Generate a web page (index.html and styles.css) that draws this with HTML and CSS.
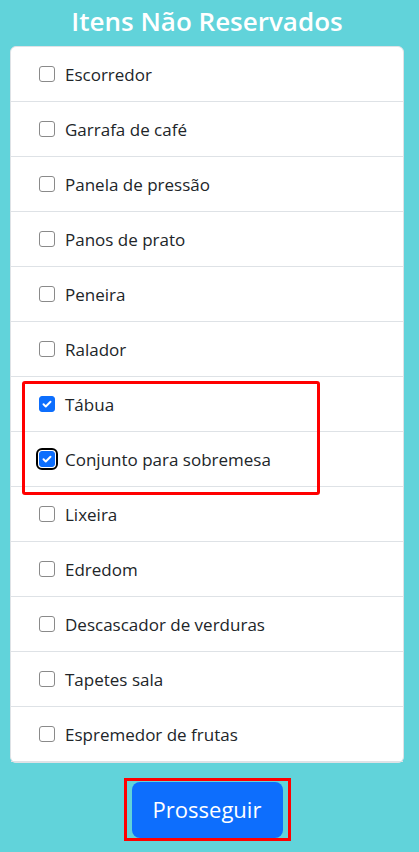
FILE: index.html
```html
<!DOCTYPE html>
<html lang="pt">
<head>
<meta charset="utf-8">
<title>Itens Não Reservados</title>
<link rel="stylesheet" href="styles.css">
</head>
<body>
<main class="page">
  <h1 class="title">Itens Não Reservados</h1>
  <ul class="list">
    <li class="item"><span class="box"></span><span class="label">Escorredor</span></li>
    <li class="item"><span class="box"></span><span class="label">Garrafa de café</span></li>
    <li class="item"><span class="box"></span><span class="label">Panela de pressão</span></li>
    <li class="item"><span class="box"></span><span class="label">Panos de prato</span></li>
    <li class="item"><span class="box"></span><span class="label">Peneira</span></li>
    <li class="item"><span class="box"></span><span class="label">Ralador</span></li>
    <li class="item"><span class="box checked"><svg viewBox="0 0 16 16" class="tick"><path d="M4 8.3l2.6 2.6L12 5.4" fill="none" stroke="#fff" stroke-width="2.2" stroke-linecap="round" stroke-linejoin="round"/></svg></span><span class="label">Tábua</span></li>
    <li class="item"><span class="box checked focused"><svg viewBox="0 0 16 16" class="tick"><path d="M4 8.3l2.6 2.6L12 5.4" fill="none" stroke="#fff" stroke-width="2.2" stroke-linecap="round" stroke-linejoin="round"/></svg></span><span class="label">Conjunto para sobremesa</span></li>
    <li class="item"><span class="box"></span><span class="label">Lixeira</span></li>
    <li class="item"><span class="box"></span><span class="label">Edredom</span></li>
    <li class="item"><span class="box"></span><span class="label">Descascador de verduras</span></li>
    <li class="item"><span class="box"></span><span class="label">Tapetes sala</span></li>
    <li class="item"><span class="box"></span><span class="label">Espremedor de frutas</span></li>
    <li class="mark mark-items" aria-hidden="true"></li>
  </ul>
  <div class="actions">
    <div class="mark-btn"><button class="btn">Prosseguir</button></div>
  </div>
</main>
</body>
</html>
```
FILE: styles.css
```css
* { box-sizing: border-box; }
html, body { margin: 0; padding: 0; }
body {
  background: #61d3da;
  font-family: "Open Sans", "Noto Sans", sans-serif;
  color: #212529;
  width: 419px;
  height: 852px;
  overflow: hidden;
}
.page {
  padding: 0 15px 0 10px;
}
.title {
  margin: 0;
  height: 46px;
  padding-top: 1px;
  text-align: center;
  color: #fff;
  font-weight: 600;
  font-size: 26px;
  line-height: 40px;
}
.list {
  list-style: none;
  margin: 0;
  padding: 0;
  background: #fff;
  border: 1px solid #dee2e6;
  border-radius: 6px;
  position: relative;
}
.item {
  height: 55px;
  display: flex;
  align-items: center;
  padding-left: 28px;
  border-bottom: 1px solid #dee2e6;
}
.item:last-of-type { border-bottom: 0; height: 54px; }
.box {
  width: 16px;
  height: 16px;
  border: 1px solid #8a8a8a;
  border-radius: 3px;
  background: #fff;
  flex: none;
  display: flex;
  align-items: center;
  justify-content: center;
  margin-right: 10px;
  margin-top: 0;
}
.box.checked {
  background: #0d6efd;
  border-color: #0d6efd;
}
.box.focused {
  outline: 2px solid #000;
  outline-offset: 1px;
}
.tick { width: 14px; height: 14px; }
.label {
  font-size: 17px;
  line-height: 24px;
  margin-top: 2px;
}
.mark {
  position: absolute;
  border: 3px solid #f00;
  border-radius: 3px;
  pointer-events: none;
}
.mark-items {
  left: 11px;
  top: 334px;
  width: 298px;
  height: 114px;
}
.actions {
  display: flex;
  justify-content: center;
  padding-top: 15px;
}
.mark-btn {
  border: 3px solid #f00;
  padding: 1px 5px 0 5px;
}
.btn {
  display: block;
  background: #0d6efd;
  color: #fff;
  border: 0;
  border-radius: 8px;
  width: 151px;
  height: 56px;
  font-family: inherit;
  font-size: 22px;
  padding: 0 0 2px 0;
}
```
